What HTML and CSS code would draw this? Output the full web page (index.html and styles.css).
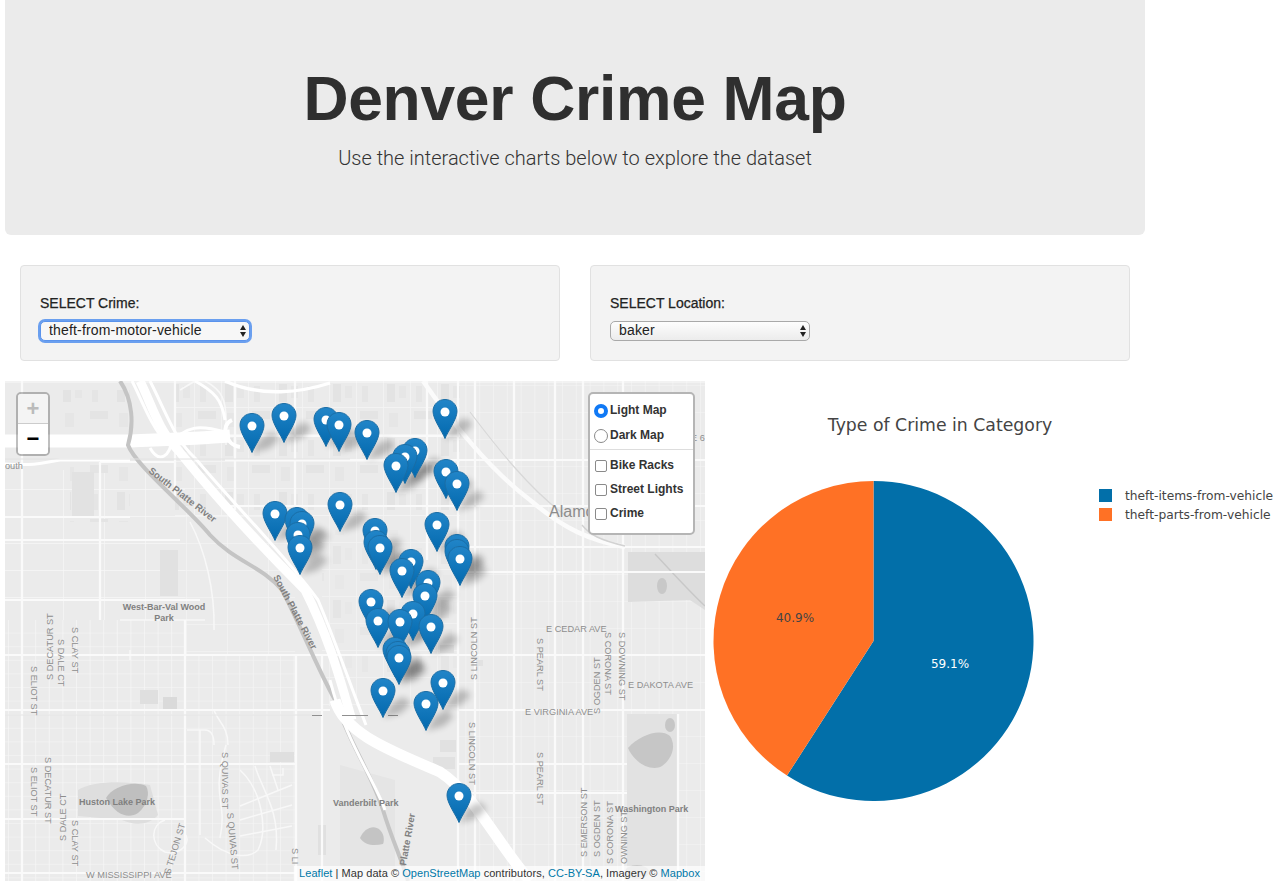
FILE: index.html
```
<!DOCTYPE html>
<html lang="en">
<head>
<meta charset="utf-8">
<title>Denver Crime Map</title>
<link rel="stylesheet" href="styles.css">
</head>
<body>
<div class="container">
  <header class="jumbotron">
    <h1>Denver Crime Map</h1>
    <p>Use the interactive charts below to explore the dataset</p>
  </header>
  <div class="filters">
    <div class="well">
      <label class="well-label" for="crime">SELECT Crime:</label>
      <div class="select-wrap select-crime">
        <select id="crime" class="select focused"><option>theft-from-motor-vehicle</option></select>
      </div>
    </div>
    <div class="well">
      <label class="well-label" for="loc">SELECT Location:</label>
      <div class="select-wrap select-loc">
        <select id="loc" class="select"><option>baker</option></select>
      </div>
    </div>
  </div>
</div>
<div class="viz">
  <div class="map">
    <svg class="map-svg" width="700" height="500" viewBox="0 0 700 500" aria-hidden="true">
      <defs>
        <pattern id="gWest" width="13.6" height="13.6" patternUnits="userSpaceOnUse" x="8" y="7">
          <path d="M0 0H13.6M0 0V13.6" stroke="#f8f8f8" stroke-width="1.2" fill="none"/>
        </pattern>
        <pattern id="gNW" width="41" height="27" patternUnits="userSpaceOnUse" x="22" y="3">
          <path d="M0 0H41M0 0V27" stroke="#f8f8f8" stroke-width="1.3" fill="none"/>
        </pattern>
        <pattern id="gEast" width="13.8" height="27" patternUnits="userSpaceOnUse" x="10" y="7">
          <path d="M0 0H13.8" stroke="#f5f5f5" stroke-width="1.1" fill="none"/>
          <path d="M0 0V27" stroke="#f5f5f5" stroke-width="1.2" fill="none"/>
        </pattern>
        <pattern id="gMid" width="27" height="27" patternUnits="userSpaceOnUse" x="5" y="2">
          <path d="M0 0H27M0 0V27" stroke="#f6f6f6" stroke-width="1.3" fill="none"/>
        </pattern>
        <pattern id="gBld" width="54" height="54" patternUnits="userSpaceOnUse" x="5" y="2">
          <rect x="4" y="4" width="8" height="18" fill="#e3e3e3"/>
          <rect x="16" y="6" width="7" height="12" fill="#e6e6e6"/>
          <rect x="31" y="31" width="18" height="8" fill="#e4e4e4"/>
          <rect x="6" y="33" width="9" height="14" fill="#e6e6e6"/>
          <rect x="33" y="6" width="6" height="16" fill="#e5e5e5"/>
        </pattern>
        <linearGradient id="pinFill" x1="0" y1="0" x2="0" y2="1">
          <stop offset="0" stop-color="#2185c8"/>
          <stop offset="1" stop-color="#0369ae"/>
        </linearGradient>
        <filter id="blur" x="-60%" y="-60%" width="220%" height="220%"><feGaussianBlur stdDeviation="3.4"/></filter>
        <filter id="soft" x="0" y="0" width="100%" height="100%"><feGaussianBlur stdDeviation="0.45"/></filter>
        <g id="sh"><path d="M0 0L9 -15L20 -21L28 -15L18 -5Z" fill="#000" opacity=".22" filter="url(#blur)"/></g>
        <g id="p">
          <path d="M0 -.5C-2.5 -7 -12 -20 -12 -27.5C-12 -34.5 -6.7 -39.5 0 -39.5C6.7 -39.5 12 -34.5 12 -27.5C12 -20 2.5 -7 0 -.5Z" fill="url(#pinFill)" stroke="#1a6da5" stroke-width="1"/>
          <circle cx="0" cy="-27" r="4.5" fill="#fff"/>
        </g>
      </defs>
      <g transform="translate(-5 -381)">
        <g filter="url(#soft)">
        <rect x="5" y="381" width="700" height="500" fill="#ebebeb"/>

        <!-- street grids -->
        <rect x="5" y="620" width="180" height="261" fill="url(#gWest)"/>
        <rect x="5" y="470" width="180" height="150" fill="url(#gNW)"/>
        <rect x="185" y="655" width="111" height="226" fill="url(#gWest)" opacity=".85"/>
        <rect x="185" y="500" width="110" height="155" fill="url(#gNW)" opacity=".7"/>
        <rect x="458" y="381" width="247" height="500" fill="url(#gEast)"/>
        <rect x="175" y="381" width="285" height="135" fill="url(#gMid)"/>
        <rect x="322" y="516" width="136" height="190" fill="url(#gMid)" opacity=".8"/>
        <rect x="175" y="381" width="285" height="135" fill="url(#gBld)"/>
        <rect x="60" y="390" width="70" height="40" fill="url(#gBld)"/>
        <rect x="70" y="462" width="60" height="60" fill="url(#gBld)"/>
        <rect x="322" y="530" width="136" height="150" fill="url(#gBld)" opacity=".7"/>

        <!-- blocks -->
        <rect x="72" y="472" width="22" height="45" fill="#e2e2e2"/>
        <rect x="160" y="550" width="18" height="46" fill="#e1e1e1"/>
        <rect x="140" y="690" width="18" height="14" fill="#dfdfdf"/>
        <rect x="163" y="697" width="14" height="12" fill="#dadada"/>
        <rect x="270" y="752" width="24" height="10" fill="#dfdfdf"/>
        <rect x="318" y="825" width="8" height="30" fill="#e0e0e0"/>
        <rect x="440" y="740" width="16" height="12" fill="#e1e1e1"/>
        <rect x="433" y="757" width="22" height="12" fill="#e1e1e1"/>
        <rect x="440" y="645" width="14" height="8" fill="#e1e1e1"/>
        <rect x="475" y="660" width="8" height="6" fill="#e2e2e2"/>

        <!-- parks -->
        <path d="M628 552H705V610L690 600L628 602Z" fill="#dddddd"/>
        <path d="M655 554C672 572 688 590 705 606" stroke="#c8c8c8" stroke-width="1.4" fill="none"/>
        <ellipse cx="662" cy="586" rx="5" ry="8" fill="#c8c8c8"/>
        <path d="M627 714H678V881H627Z" fill="#e2e2e2"/>
        <path d="M628 748C640 735 660 728 670 736C676 745 673 758 662 766C652 772 635 764 628 748Z" fill="#c6c6c6"/>
        <ellipse cx="670" cy="725" rx="5" ry="7" fill="#c6c6c6"/>
        <ellipse cx="637" cy="872" rx="12" ry="7" fill="#cacaca"/>
        <path d="M78 790C90 782 120 780 150 785L158 815C150 825 135 826 122 820L78 816Z" fill="#dedede"/>
        <path d="M106 798C112 786 135 780 146 786C150 792 148 805 138 813C130 818 118 818 106 798Z" fill="#bfbfbf"/>
        <path d="M340 765L395 780V870H340Z" fill="#e5e5e5"/>
        <path d="M360 838C364 828 374 824 380 830C385 835 384 842 383 844C375 846 365 846 360 838Z" fill="#c4c4c4"/>

        <!-- curving local streets -->
        <g fill="none" stroke="#f8f8f8" stroke-width="1.5">
          <path d="M165 820C150 825 150 845 165 852C180 855 190 845 186 835"/>
          <path d="M214 710C218 722 228 726 228 745"/>
          <path d="M187 730H205C212 730 214 738 214 745"/>
          <path d="M200 730V835"/>
          <path d="M226 745C210 800 228 800 220 838"/>
          <path d="M240 770C262 790 268 830 258 850C250 858 230 860 205 838"/>
          <path d="M255 766C262 790 280 810 276 850"/>
          <path d="M240 806L292 785M240 820L292 805M240 836L292 826"/>
          <path d="M270 766L278 790M283 768V775H272"/>
          <path d="M180 390L195 381M205 381C222 390 226 400 226 420M226 420V445"/>
          <path d="M190 522C205 550 215 590 214 630"/>
          <path d="M120 620H205M130 650V660"/>
        </g>

        <!-- major streets -->
        <g fill="none" stroke="#fafafa" stroke-width="2.2">
          <path d="M5 655H460M5 710H330M5 764H296M5 873H296M5 819H186"/>
          <path d="M22 381V881M185 620V881M296 655V881M322 655V881M458 381V881"/>
          <path d="M458 655H705M458 710H705M458 764H627M458 793H627M678 714V881"/>
          <path d="M514 381V881M555 381V881M583 381V881M623 381V881"/>
          <path d="M175 381V500M235 381V510M295 381V510M427 381V560M475 381V881"/>
          <path d="M225 436H460M230 506H705M225 460H705M460 572H705M460 547H705M5 540H180M5 517H130M5 600H200"/>
          <path d="M100 462H175M100 462V620"/>
          <path d="M5 382H705" stroke-width="1.2"/>
        </g>

        <!-- top highway and branches -->
        <path d="M5 441C40 441 90 441 128 441C150 440 190 439 230 436" fill="none" stroke="#fff" stroke-width="13"/>
        <path d="M5 464C40 466 45 462 60 460H130" fill="none" stroke="#fff" stroke-width="3"/>
        <path d="M225 381C262 398 302 392 330 383" fill="none" stroke="#fff" stroke-width="3.4"/>
        <path d="M195 381C215 392 222 400 225 420" fill="none" stroke="#fff" stroke-width="3"/>

        <!-- river -->
        <path d="M120 381C133 400 134 425 128 445C135 465 190 510 210 535C235 562 262 566 282 590C298 620 318 670 335 700C350 745 370 770 383 810C392 840 402 860 408 881" fill="none" stroke="#c4c4c4" stroke-width="4"/>

        <!-- I-25 -->
        <g fill="none" stroke="#fff">
          <path d="M140 381C152 405 158 430 178 450C210 490 260 545 305 590C330 640 340 680 352 720" stroke-width="9"/>
          <path d="M150 381C165 410 175 440 195 458C230 500 285 555 318 600C335 640 352 690 366 725" stroke-width="3"/>
          <path d="M132 381C142 400 150 425 168 445" stroke-width="3"/>
          <path d="M170 445C185 425 200 425 225 432M150 448C160 465 170 455 172 440" stroke-width="3"/>
          <path d="M232 420C220 425 225 445 240 447" stroke-width="4"/>
          <path d="M330 680C345 740 372 775 385 810" stroke-width="3"/>
          <path d="M335 700C345 735 395 752 440 772C475 795 495 840 530 881" stroke-width="11"/>
        </g>
        <!-- Santa Fe diagonal -->
        <g fill="none">
          <path d="M423 381C450 420 490 470 530 500C565 530 590 540 625 547" stroke="#fbfbfb" stroke-width="4.5"/>
          <path d="M470 412C495 445 530 490 565 515" stroke="#d8d8d8" stroke-width="1.2"/>
          <path d="M582 525C590 535 600 540 625 546" stroke="#d2d2d2" stroke-width="1.4"/>
        </g>

        <!-- tile seams -->
        <path d="M5 459H350" stroke="#e2e2e2" stroke-width="1"/>
        <path d="M5 715H312" stroke="#e4e4e4" stroke-width="1"/>
        </g>
        <path d="M312 715.5H322M342 715.5H368M388 715.5H398" stroke="#8f8f8f" stroke-width="1"/>

        <!-- labels -->
        <g class="lbl">
          <text class="lbl-b lbl-river" transform="translate(148 472) rotate(38)">South Platte River</text>
          <text class="lbl-b lbl-river" transform="translate(273 577) rotate(62)">South Platte River</text>
          <text class="lbl-b lbl-river" transform="translate(406 866) rotate(-80)">Platte River</text>
          <text class="lbl-b" text-anchor="middle" x="164" y="610">West-Bar-Val Wood</text>
          <text class="lbl-b" text-anchor="middle" x="164" y="621">Park</text>
          <text x="5" y="469">outh</text>
          <text class="lbl-big" x="549" y="517">Alamo</text>
          <text x="546" y="632">E CEDAR AVE</text>
          <text x="691" y="441">E 6</text>
          <text transform="translate(477 680) rotate(-90)">S LINCOLN ST</text>
          <text transform="translate(469 722) rotate(90)">S LINCOLN ST</text>
          <text transform="translate(31 666) rotate(90)">S ELIOT ST</text>
          <text transform="translate(31 767) rotate(90)">S ELIOT ST</text>
          <text transform="translate(53 680) rotate(-90)">S DECATUR ST</text>
          <text transform="translate(45 757) rotate(90)">S DECATUR ST</text>
          <text transform="translate(58 639) rotate(90)">S DALE CT</text>
          <text transform="translate(66 841) rotate(-90)">S DALE CT</text>
          <text transform="translate(72 627) rotate(90)">S CLAY ST</text>
          <text transform="translate(72 820) rotate(90)">S CLAY ST</text>
          <text transform="translate(222 752) rotate(90)">S QUIVAS ST</text>
          <text transform="translate(227 813) rotate(85)">S QUIVAS ST</text>
          <text transform="translate(170 875) rotate(-73)">S TEJON ST</text>
          <text transform="translate(292 848) rotate(90)">S LI</text>
          <text x="86" y="878">W MISSISSIPPI AVE</text>
          <text class="lbl-b" x="79" y="805">Huston Lake Park</text>
          <text class="lbl-b" x="333" y="806">Vanderbilt Park</text>
          <text x="628" y="688">E DAKOTA AVE</text>
          <text x="525" y="715">E VIRGINIA AVE</text>
          <text transform="translate(537 638) rotate(90)">S PEARL ST</text>
          <text transform="translate(537 752) rotate(90)">S PEARL ST</text>
          <text transform="translate(600 714) rotate(-90)">S OGDEN ST</text>
          <text transform="translate(605 632) rotate(90)">S CORONA ST</text>
          <text transform="translate(619 632) rotate(90)">S DOWNING ST</text>
          <text transform="translate(587 857) rotate(-90)">S EMERSON ST</text>
          <text transform="translate(600 857) rotate(-90)">S OGDEN ST</text>
          <text transform="translate(613 864) rotate(-90)">S CORONA ST</text>
          <text transform="translate(627 864) rotate(-90)">OWNING ST</text>
          <text class="lbl-b" x="615" y="812">Washington Park</text>
        </g>

        <!-- marker shadows -->
        <g>
          <use href="#sh" x="445" y="439"/><use href="#sh" x="284" y="443"/><use href="#sh" x="326" y="447"/><use href="#sh" x="339" y="452"/><use href="#sh" x="252" y="453"/><use href="#sh" x="367" y="460"/><use href="#sh" x="415" y="478"/><use href="#sh" x="405" y="484"/><use href="#sh" x="396" y="493"/><use href="#sh" x="446" y="499"/><use href="#sh" x="457" y="511"/><use href="#sh" x="340" y="532"/><use href="#sh" x="275" y="541"/><use href="#sh" x="297" y="547"/><use href="#sh" x="302" y="551"/><use href="#sh" x="437" y="552"/><use href="#sh" x="375" y="558"/><use href="#sh" x="298" y="562"/><use href="#sh" x="376" y="570"/><use href="#sh" x="457" y="574"/><use href="#sh" x="300" y="575"/><use href="#sh" x="380" y="575"/><use href="#sh" x="457" y="579"/><use href="#sh" x="460" y="586"/><use href="#sh" x="411" y="589"/><use href="#sh" x="402" y="598"/><use href="#sh" x="428" y="610"/><use href="#sh" x="425" y="623"/><use href="#sh" x="371" y="629"/><use href="#sh" x="413" y="641"/><use href="#sh" x="378" y="648"/><use href="#sh" x="400" y="649"/><use href="#sh" x="431" y="654"/><use href="#sh" x="395" y="677"/><use href="#sh" x="398" y="681"/><use href="#sh" x="399" y="685"/><use href="#sh" x="443" y="710"/><use href="#sh" x="383" y="718"/><use href="#sh" x="426" y="731"/><use href="#sh" x="459" y="823"/>
        </g>
        <!-- markers -->
        <g>
          <use href="#p" x="445" y="439"/><use href="#p" x="284" y="443"/><use href="#p" x="326" y="447"/><use href="#p" x="339" y="452"/><use href="#p" x="252" y="453"/><use href="#p" x="367" y="460"/><use href="#p" x="415" y="478"/><use href="#p" x="405" y="484"/><use href="#p" x="396" y="493"/><use href="#p" x="446" y="499"/><use href="#p" x="457" y="511"/><use href="#p" x="340" y="532"/><use href="#p" x="275" y="541"/><use href="#p" x="297" y="547"/><use href="#p" x="302" y="551"/><use href="#p" x="437" y="552"/><use href="#p" x="375" y="558"/><use href="#p" x="298" y="562"/><use href="#p" x="376" y="570"/><use href="#p" x="457" y="574"/><use href="#p" x="300" y="575"/><use href="#p" x="380" y="575"/><use href="#p" x="457" y="579"/><use href="#p" x="460" y="586"/><use href="#p" x="411" y="589"/><use href="#p" x="402" y="598"/><use href="#p" x="428" y="610"/><use href="#p" x="425" y="623"/><use href="#p" x="371" y="629"/><use href="#p" x="413" y="641"/><use href="#p" x="378" y="648"/><use href="#p" x="400" y="649"/><use href="#p" x="431" y="654"/><use href="#p" x="395" y="677"/><use href="#p" x="398" y="681"/><use href="#p" x="399" y="685"/><use href="#p" x="443" y="710"/><use href="#p" x="383" y="718"/><use href="#p" x="426" y="731"/><use href="#p" x="459" y="823"/>
        </g>
      </g>
    </svg>

    <div class="zoom-ctl">
      <span class="zoom-btn zoom-disabled">+</span>
      <span class="zoom-btn">&minus;</span>
    </div>

    <form class="layers">
      <label class="layer-row layer-radio"><input type="radio" name="base" checked><span>Light Map</span></label>
      <label class="layer-row layer-radio"><input type="radio" name="base"><span>Dark Map</span></label>
      <div class="layer-sep"></div>
      <label class="layer-row layer-check"><input type="checkbox"><span>Bike Racks</span></label>
      <label class="layer-row layer-check"><input type="checkbox"><span>Street Lights</span></label>
      <label class="layer-row layer-check"><input type="checkbox"><span>Crime</span></label>
    </form>

    <div class="attrib"><a href="#">Leaflet</a> | Map data © <a href="#">OpenStreetMap</a> contributors, <a href="#">CC-BY-SA</a>, Imagery © <a href="#">Mapbox</a></div>
  </div>

  <svg class="chart" width="578" height="500" viewBox="0 0 578 500" role="img" aria-label="Type of Crime in Category">
    <g transform="translate(-705 -381)">
      <text class="chart-title" x="940" y="431" text-anchor="middle">Type of Crime in Category</text>
      <path d="M873.5 641V481A160 160 0 1 1 787 775.6Z" fill="#026fa9"/>
      <path d="M873.5 641L787 775.6A160 160 0 0 1 873.5 481Z" fill="#ff7125"/>
      <text class="pie-val pie-light" x="950" y="668" text-anchor="middle">59.1%</text>
      <text class="pie-val" x="795" y="622" text-anchor="middle">40.9%</text>
      <rect x="1099" y="489" width="13" height="13" fill="#026fa9"/>
      <rect x="1099" y="508" width="13" height="13" fill="#ff7125"/>
      <text class="legend" x="1125" y="500">theft-items-from-vehicle</text>
      <text class="legend" x="1125" y="519">theft-parts-from-vehicle</text>
    </g>
  </svg>
</div>
</body>
</html>
```
FILE: styles.css
```
* { box-sizing: border-box; }
html, body { margin: 0; padding: 0; }
body {
  background: #fff;
  color: #333;
  font-family: "Liberation Sans", Arial, sans-serif;
  font-size: 14px;
  width: 1283px;
  height: 887px;
  overflow: hidden;
}
.container { width: 1140px; margin-left: 5px; }
.jumbotron {
  height: 235px;
  background: #ebebeb;
  border-radius: 0 0 6px 6px;
  text-align: center;
  padding-top: 63px;
}
.jumbotron h1 {
  margin: 0;
  font-size: 62.4px;
  line-height: 72px;
  font-weight: 700;
  color: #2f2f2f;
  letter-spacing: -0.3px;
}
.jumbotron p {
  margin: 11px 0 0;
  font-family: Roboto, "Liberation Sans", sans-serif;
  font-weight: 300;
  font-size: 20px;
  line-height: 24px;
  color: #333;
}
.filters {
  display: grid;
  grid-template-columns: 540px 540px;
  column-gap: 30px;
  padding: 30px 15px 0;
}
.well {
  height: 96px;
  background: #f3f3f3;
  border: 1px solid #e1e1e1;
  border-radius: 4px;
  padding: 27px 19px 0;
}
.well-label {
  display: block;
  font-weight: 400;
  -webkit-text-stroke: 0.25px #222;
  font-size: 14px;
  line-height: 20px;
  color: #222;
  margin-bottom: 8px;
}
.select-wrap { position: relative; height: 20px; }
.select-crime { width: 210px; }
.select-loc { width: 200px; }
.select-wrap::before, .select-wrap::after {
  content: "";
  position: absolute;
  right: 4px;
  width: 0;
  height: 0;
  border-left: 3.5px solid transparent;
  border-right: 3.5px solid transparent;
  pointer-events: none;
}
.select-wrap::before { top: 4px; border-bottom: 5px solid #222; }
.select-wrap::after { top: 11px; border-top: 5px solid #222; }
.select {
  appearance: none;
  -webkit-appearance: none;
  display: block;
  width: 100%;
  height: 20px;
  font-family: "Liberation Sans", Arial, sans-serif;
  font-size: 14px;
  line-height: 16px;
  letter-spacing: 0.17px;
  color: #222;
  padding: 0 16px 2px 8px;
  background: linear-gradient(#fdfdfd, #ececec);
  border: 1px solid #a9a9a9;
  border-radius: 5px;
  margin: 0;
}
.select.focused {
  border-color: #5a93ec;
  box-shadow: 0 0 0 2px #6a9fef;
  background: #f7f7f7;
  outline: none;
}
.viz { display: flex; margin: 20px 0 0 5px; }
.map { position: relative; width: 700px; height: 500px; overflow: hidden; flex: none; background: #ebebeb; }
.map-svg { display: block; }
.map-svg text { font-family: "Liberation Sans", Arial, sans-serif; }
.lbl { font-size: 9.2px; fill: #8e8e8e; }
.lbl .lbl-b { font-weight: 700; font-size: 9px; fill: #808080; }
.lbl .lbl-river { font-size: 9.6px; }
.lbl .lbl-big { font-size: 16px; fill: #8c8c8c; }
.zoom-ctl {
  position: absolute;
  left: 11px;
  top: 11px;
  width: 34px;
  border: 2px solid rgba(0,0,0,.25);
  border-radius: 5px;
  background-clip: padding-box;
  overflow: hidden;
}
.zoom-btn {
  display: block;
  width: 30px;
  height: 30px;
  line-height: 30px;
  text-align: center;
  font-family: "Liberation Sans", Arial, sans-serif;
  font-weight: 700;
  font-size: 22px;
  color: #000;
  background: #fff;
}
.zoom-disabled {
  color: #bbb;
  background: #f4f4f4;
  border-bottom: 1px solid #ccc;
}
.layers {
  position: absolute;
  left: 583px;
  top: 11px;
  width: 107px;
  height: 143px;
  background: #fff;
  border: 2px solid #b5b5b5;
  border-radius: 5px;
  padding: 3px 0 0 4px;
}
.layer-row {
  display: flex;
  align-items: center;
  font-size: 12px;
  font-weight: 700;
  color: #333;
  white-space: nowrap;
}
.layer-radio { height: 25px; }
.layer-check { height: 24px; }
.layer-row input { margin: 2px 2px 0 0; width: 14px; height: 14px; flex: none; }
.layer-row input[type=checkbox] {
  appearance: none;
  -webkit-appearance: none;
  width: 12px;
  height: 12px;
  margin: 2px 3px 0 1px;
  border: 1px solid #8a8a8a;
  border-radius: 2px;
  background: #fff;
}
.layer-row input[type=radio] {
  appearance: none;
  -webkit-appearance: none;
  border: 1px solid #8a8a8a;
  border-radius: 50%;
  background: #fff;
}
.layer-row input[type=radio]:checked {
  border: 4.5px solid #1079f5;
}
.layer-sep { height: 1px; background: #ddd; margin: 2px 0 3px -4px; }
.attrib {
  position: absolute;
  right: 0;
  bottom: 0;
  height: 15px;
  padding: 0 5px;
  background: rgba(255,255,255,.7);
  font-size: 11px;
  line-height: 15px;
  letter-spacing: 0.05px;
  color: #333;
  white-space: nowrap;
}
.attrib a { color: #0078a8; text-decoration: none; }
.chart { display: block; flex: none; }
.chart text { font-family: "DejaVu Sans", Verdana, sans-serif; }
.chart-title { font-size: 17.3px; fill: #444; }
.pie-val { font-size: 12px; fill: #444; }
.pie-light { fill: #fff; }
.legend { font-size: 12.25px; fill: #444; }
```
